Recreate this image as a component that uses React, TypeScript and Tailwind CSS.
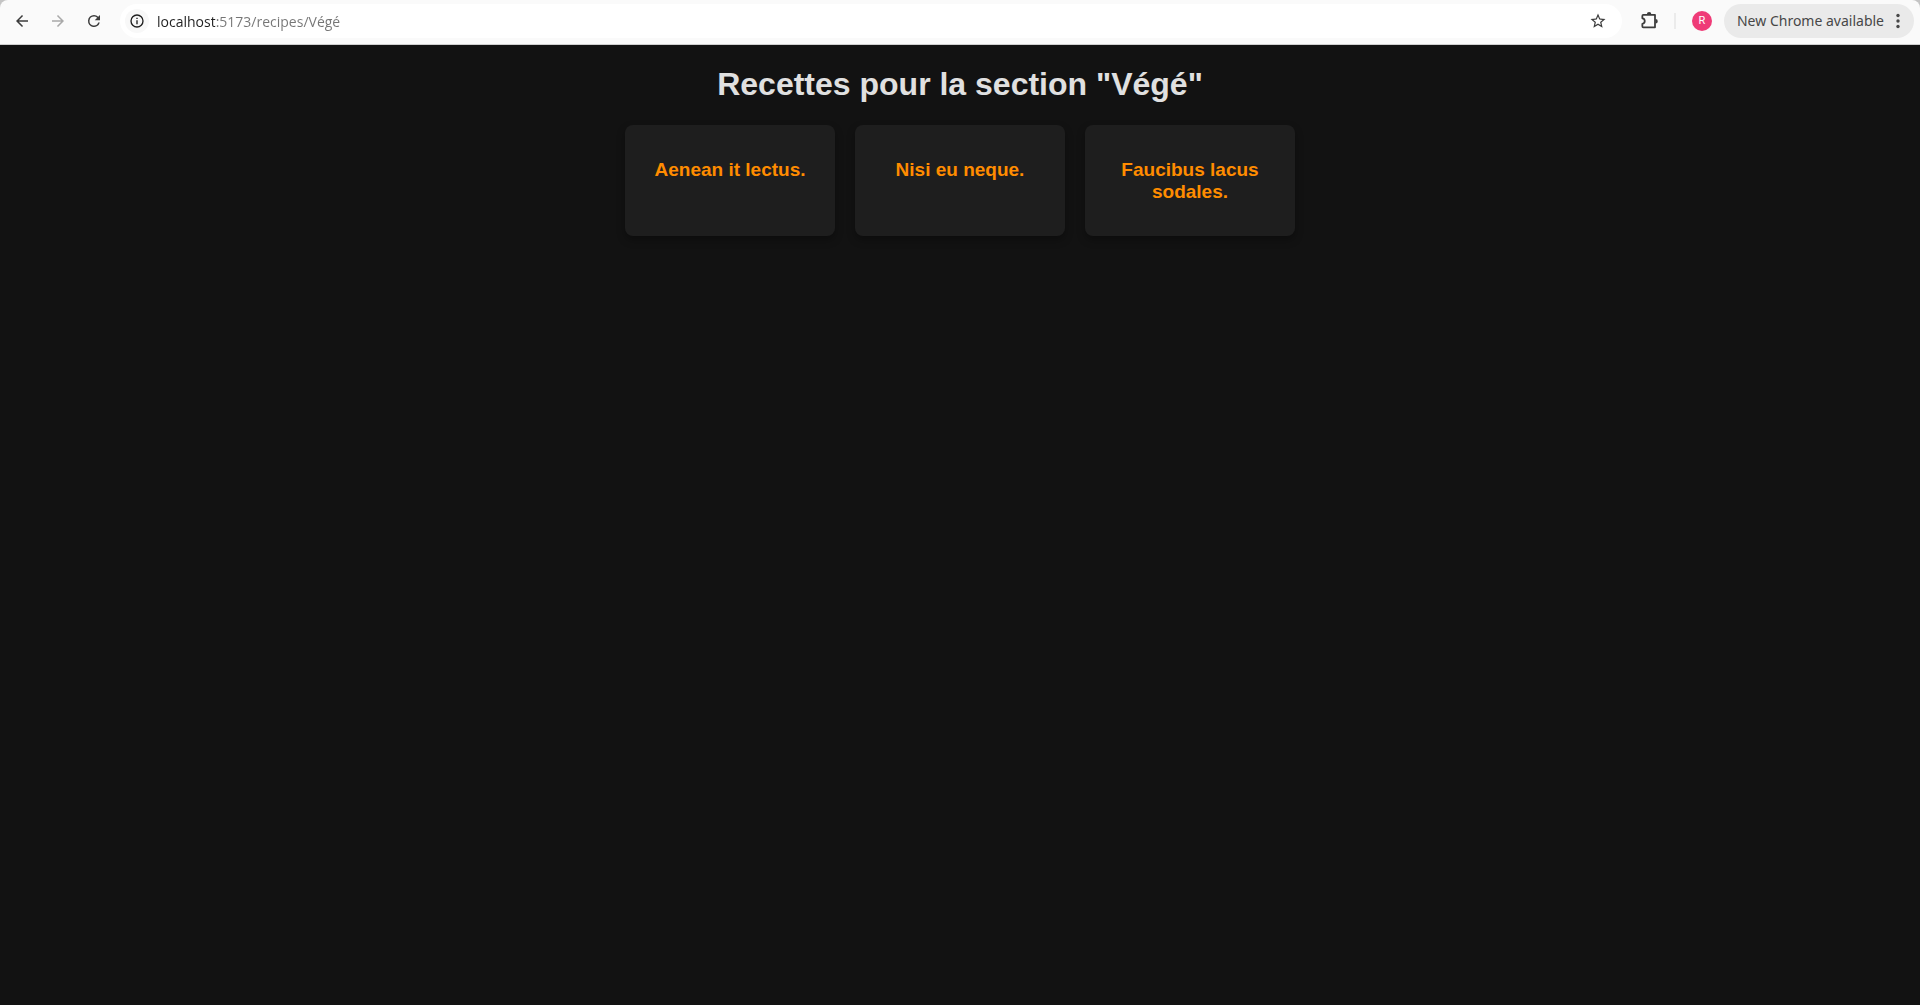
import type { ReactNode } from "react";

const recipes = ["Aenean it lectus.", "Nisi eu neque.", "Faucibus lacus sodales."];

type IconButtonProps = { label: string; disabled?: boolean; children: ReactNode };

function IconButton({ label, disabled, children }: IconButtonProps) {
  return (
    <button
      type="button"
      aria-label={label}
      disabled={disabled}
      className="flex size-7 shrink-0 items-center justify-center rounded-full text-[#3c3c3c] disabled:text-[#a9a9a9]"
    >
      {children}
    </button>
  );
}

function Toolbar() {
  return (
    <div className="bg-[#c4c4c4]">
      <div className="flex h-[45px] items-center rounded-t-lg border-b border-[#cfcfcf] bg-[#fafafa] pt-1 pr-1.5 pb-1.5 pl-2 font-['Noto_Sans',sans-serif]">
        <div className="flex gap-2">
          <IconButton label="Back">
            <svg viewBox="0 0 24 24" className="size-[18px]" fill="currentColor">
              <path d="M20 11H7.83l5.59-5.59L12 4l-8 8 8 8 1.41-1.41L7.83 13H20v-2z" />
            </svg>
          </IconButton>
          <IconButton label="Forward" disabled>
            <svg viewBox="0 0 24 24" className="size-[18px]" fill="currentColor">
              <path d="M12 4l-1.41 1.41L16.17 11H4v2h12.17l-5.58 5.59L12 20l8-8z" />
            </svg>
          </IconButton>
          <IconButton label="Reload">
            <svg viewBox="0 0 24 24" className="size-[18px]" fill="currentColor">
              <path d="M17.65 6.35A7.96 7.96 0 0 0 12 4a8 8 0 1 0 7.73 10h-2.08A6 6 0 1 1 12 6c1.66 0 3.14.69 4.22 1.78L13 11h7V4l-2.35 2.35z" />
            </svg>
          </IconButton>
        </div>

        <div className="ml-3 flex h-[34px] min-w-0 flex-1 items-center rounded-full bg-white pr-2.5 pl-[5px]">
          <button
            type="button"
            aria-label="View site information"
            className="flex size-6 shrink-0 items-center justify-center rounded-full bg-[#f8f8f8] text-[#1f1f1f]"
          >
            <svg viewBox="0 0 24 24" className="size-4" fill="currentColor">
              <path d="M11 17h2v-6h-2v6zM12 2a10 10 0 1 0 0 20 10 10 0 0 0 0-20zm0 18a8 8 0 1 1 0-16 8 8 0 0 1 0 16zM11 9h2V7h-2v2z" />
            </svg>
          </button>
          <input
            type="text"
            aria-label="Address"
            defaultValue="localhost:5173/recipes/Végé"
            className="ml-2 h-6 min-w-0 flex-1 bg-[linear-gradient(90deg,#1f1f1f_58px,#757575_58px)] bg-clip-text font-['Open_Sans',sans-serif] text-sm text-transparent caret-black outline-none"
          />
          <IconButton label="Bookmark this tab">
            <svg viewBox="0 0 24 24" className="size-[18px]" fill="currentColor">
              <path d="M22 9.24l-7.19-.62L12 2 9.19 8.63 2 9.24l5.46 4.73L5.82 21 12 17.27 18.18 21l-1.63-7.03L22 9.24zM12 15.4l-3.76 2.27 1-4.28-3.32-2.88 4.38-.38L12 6.1l1.71 4.04 4.38.38-3.32 2.88 1 4.28L12 15.4z" />
            </svg>
          </IconButton>
        </div>

        <div className="ml-3.5 flex items-center">
          <IconButton label="Extensions">
            <svg viewBox="0 0 18 18" className="size-5" fill="none">
              <path
                d="M3 3.5h10.5v11.2H3a.9.9 0 0 1-.9-.9v-2.2c2.9-.3 2.9-4.7 0-5V4.4a.9.9 0 0 1 .9-.9z"
                stroke="currentColor"
                strokeWidth="1.6"
                strokeLinejoin="round"
              />
              <path d="M6.2 3a2 2 0 0 1 4 0zM14 7.2a2 2 0 0 1 0 4z" fill="currentColor" />
            </svg>
          </IconButton>
          <div className="mr-3 ml-2.5 h-4 w-0.5 bg-[#ebebeb]" />
          <button
            type="button"
            aria-label="Profile R"
            className="mx-1 flex size-5 items-center justify-center rounded-full bg-[#ef3b77] font-[Roboto,sans-serif] text-[11px] text-white"
          >
            R
          </button>
          <button
            type="button"
            className="ml-2 flex h-[34px] items-center gap-1.5 rounded-full bg-[#eaeaea] pr-2 pl-[13px] text-sm whitespace-nowrap text-[#474747]"
          >
            New Chrome available
            <svg viewBox="0 0 16 16" className="size-4" fill="currentColor">
              <circle cx="8" cy="2.5" r="1.7" />
              <circle cx="8" cy="8" r="1.7" />
              <circle cx="8" cy="13.5" r="1.7" />
            </svg>
          </button>
        </div>
      </div>
    </div>
  );
}

export default function App() {
  return (
    <div className="flex min-h-screen flex-col bg-[#121212]">
      <Toolbar />
      <main className="flex flex-1 flex-col items-center p-5 font-['Liberation_Sans',Arial,sans-serif]">
        <h1 className="mb-[22px] text-center text-[32px] leading-[38px] font-bold text-[#e0e0e0]">
          Recettes pour la section "Végé"
        </h1>
        <ul className="flex flex-wrap justify-center gap-5">
          {recipes.map((name) => (
            <li
              key={name}
              className="w-[210px] rounded-lg bg-[#1e1e1e] px-5 pt-[34px] pb-[33px] text-center shadow-[0_4px_8px_rgba(0,0,0,0.3)]"
            >
              <h3 className="text-[19px] leading-[22px] font-bold text-[#ff8c00]">{name}</h3>
            </li>
          ))}
        </ul>
      </main>
    </div>
  );
}
